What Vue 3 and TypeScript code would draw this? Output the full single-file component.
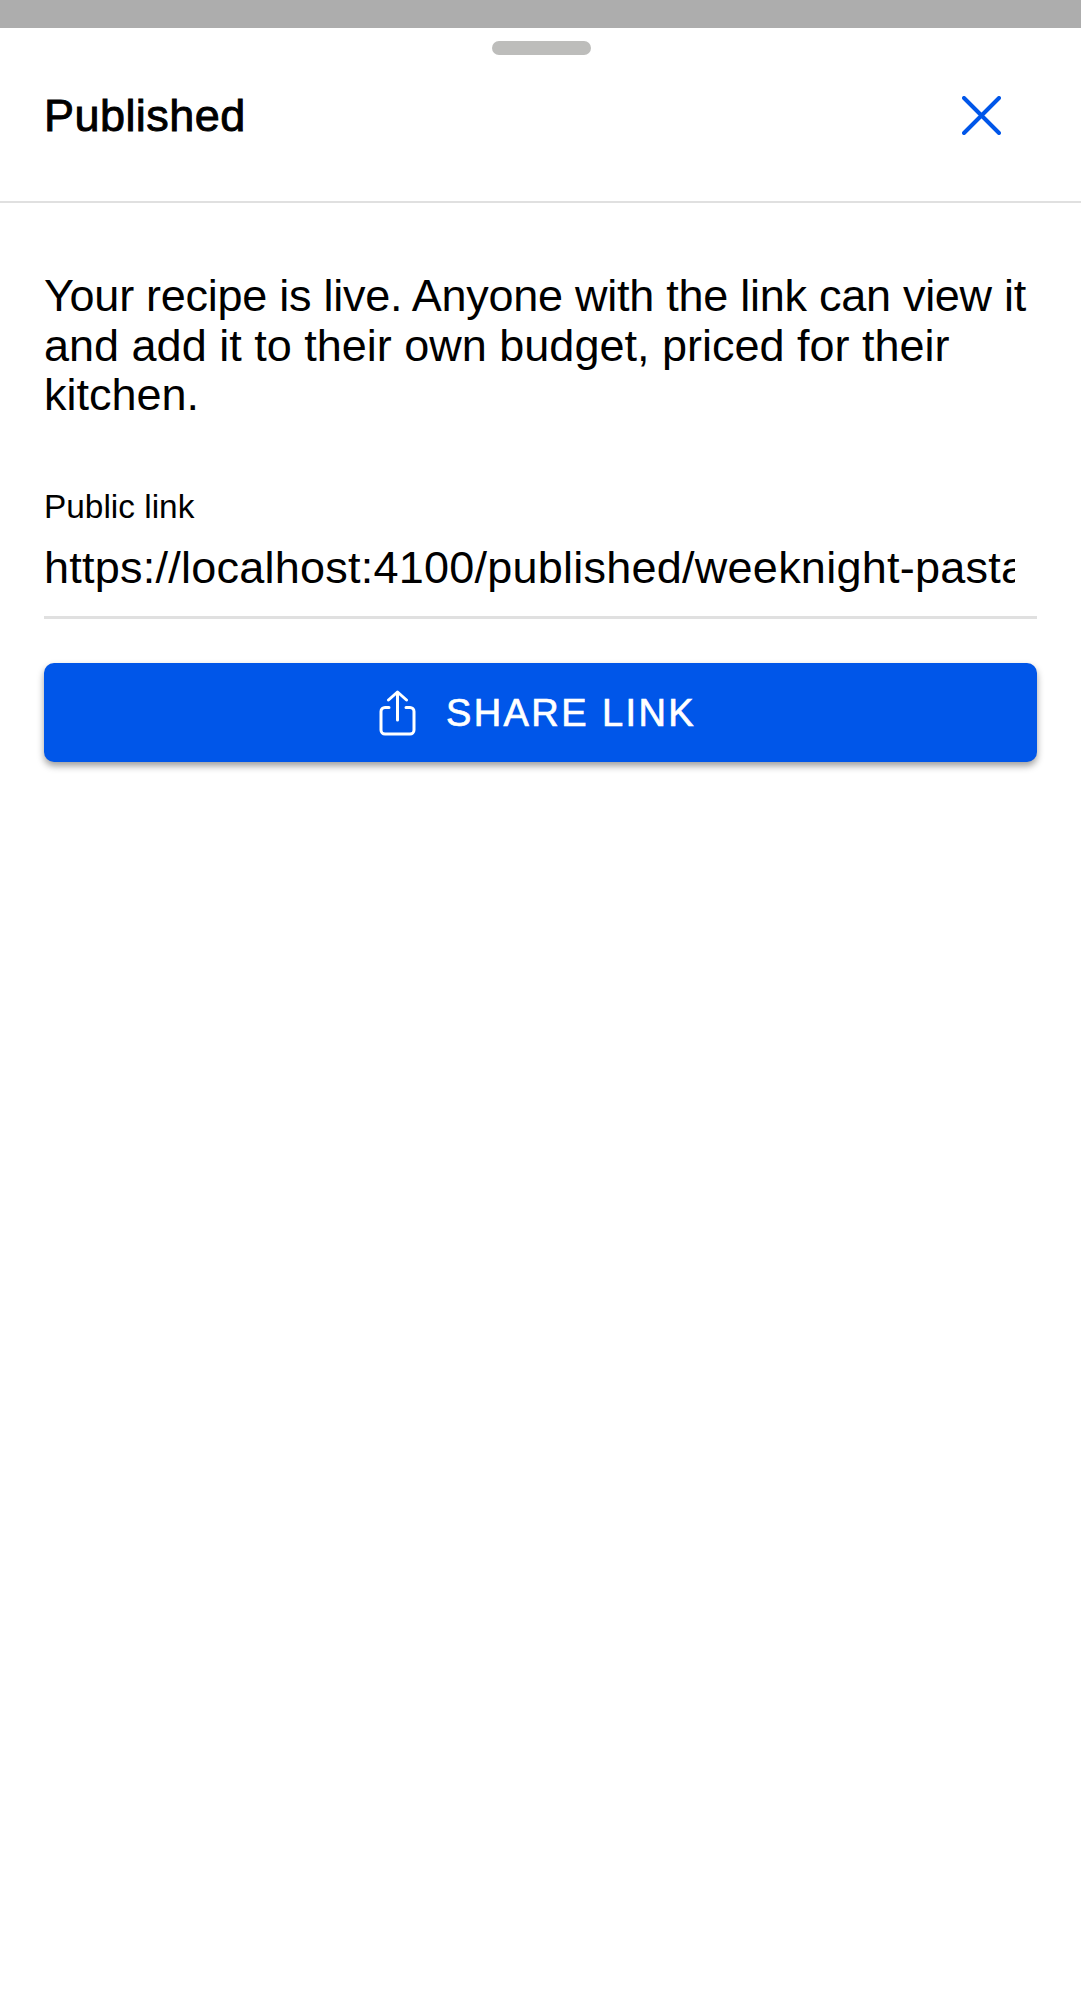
<script setup lang="ts">
const url = 'https://localhost:4100/published/weeknight-pasta'
</script>

<template>
  <div class="page">
    <div class="backdrop"></div>
    <section class="sheet">
      <div class="handle"></div>
      <header class="head">
        <h1 class="title">Published</h1>
        <button class="close" aria-label="Close">
          <svg width="39" height="39" viewBox="0 0 39 39" fill="none" stroke="#0056e9" stroke-width="4" stroke-linecap="round">
            <path d="M2 2 L37 37 M37 2 L2 37" />
          </svg>
        </button>
      </header>
      <div class="body">
        <p class="intro">Your recipe is live. Anyone with the link can view it and add it to their own budget, priced for their kitchen.</p>
        <label class="label">Public link</label>
        <div class="field"><div class="value">{{ url }}</div></div>
        <button class="share">
          <svg class="share-icon" width="37" height="46" viewBox="0 0 37 46" fill="none" stroke="#fff" stroke-width="3" stroke-linecap="round" stroke-linejoin="round">
            <path d="M10 17.5 H6 a4 4 0 0 0 -4 4 V40 a4 4 0 0 0 4 4 H31 a4 4 0 0 0 4 -4 V21.5 a4 4 0 0 0 -4 -4 H27" />
            <path d="M18.5 30 V2 M9.5 10 L18.5 2 L27.5 10" />
          </svg>
          <span>SHARE LINK</span>
        </button>
      </div>
    </section>
  </div>
</template>

<style>
html, body { margin: 0; background: #fff; }
</style>

<style scoped>
.page {
  width: 1081px;
  height: 1999px;
  display: flex;
  flex-direction: column;
  font-family: "Liberation Sans", Arial, sans-serif;
  color: #000;
  overflow: hidden;
}
.backdrop { height: 28px; background: #adadad; flex: none; }
.sheet { flex: 1; background: #fff; display: flex; flex-direction: column; }
.handle {
  width: 99px;
  height: 14px;
  border-radius: 7px;
  background: #bdbdbb;
  margin: 13px 0 0 492px;
}
.head {
  height: 148px;
  box-sizing: border-box;
  border-bottom: 2px solid #e0e0e0;
  display: flex;
  align-items: center;
  justify-content: space-between;
  padding: 0 80px 26px 44px;
}
.title {
  margin: 2px 0 0;
  font-size: 45px;
  font-weight: 400;
  line-height: 50px;
  letter-spacing: 0.45px;
  -webkit-text-stroke: 0.9px #000;
}
.close { border: 0; background: none; padding: 0; display: flex; }
.body { padding: 68px 44px 0 44px; display: flex; flex-direction: column; }
.intro { margin: 0; font-size: 45px; line-height: 49.5px; }
.intro::first-line { letter-spacing: -0.27px; }
.label { margin-top: 67px; font-size: 33.4px; line-height: 40px; }
.field { border-bottom: 3px solid #e0e0e0; padding: 15px 22px 22px 0; }
.value { font-size: 45px; line-height: 52px; letter-spacing: 0.24px; white-space: nowrap; overflow: hidden; }
.share {
  margin-top: 44px;
  height: 99px;
  padding: 2px 6px 0 0;
  border: 0;
  border-radius: 10px;
  background: #0056e9;
  color: #fff;
  font: 400 38px "Liberation Sans", Arial, sans-serif;
  letter-spacing: 2.4px;
  -webkit-text-stroke: 0.7px #fff;
  display: flex;
  align-items: center;
  justify-content: center;
  gap: 30px;
  box-shadow: 0 4px 7px rgba(0, 0, 0, 0.38);
}
.share-icon { flex: none; }
</style>
